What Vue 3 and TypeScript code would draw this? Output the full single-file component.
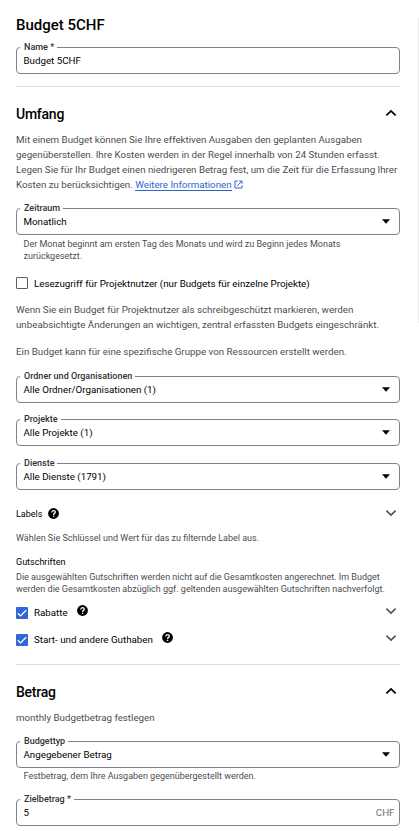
<script setup lang="ts">
import { ref } from 'vue'

interface Field {
  label: string
  value: string
  gap: string
}

const resourceFields: Field[] = [
  { label: 'Ordner und Organisationen', value: 'Alle Ordner/Organisationen (1)', gap: 'gap-17' },
  { label: 'Projekte', value: 'Alle Projekte (1)', gap: 'gap-16' },
  { label: 'Dienste', value: 'Alle Dienste (1791)', gap: 'gap-17' },
]

const credits = ref([
  { label: 'Rabatte', gap: 'gap-11', checked: true },
  { label: 'Start- und andere Guthaben', gap: 'gap-13', checked: true },
])
</script>

<template>
  <main class="panel">
    <div class="edge"></div>
    <h1 class="heading title">Budget 5CHF</h1>

    <div class="field gap-13">
      <span class="field-label">Name *</span>
      <span class="value">Budget 5CHF</span>
    </div>

    <div class="divider gap-12"></div>

    <section>
      <header class="section-head">
        <h2 class="heading">Umfang</h2>
        <svg class="chevron dark" viewBox="0 0 12 8"><path d="M1.4 6.3 6 1.9l4.6 4.4" /></svg>
      </header>
      <p class="copy gap-9">
        Mit einem Budget können Sie Ihre effektiven Ausgaben den geplanten Ausgaben<br />
        gegenüberstellen. Ihre Kosten werden in der Regel innerhalb von 24 Stunden erfasst.<br />
        Legen Sie für Ihr Budget einen niedrigeren Betrag fest, um die Zeit für die Erfassung Ihrer<br />
        Kosten zu berücksichtigen. <a class="link">Weitere Informationen</a>
        <svg class="external" viewBox="0 0 9 9"><path d="M3.7 1H1v7h7V5.3M5.2 1H8v2.8M8 1 3.2 5.8" /></svg>
      </p>

      <div class="field gap-16">
        <span class="field-label">Zeitraum</span>
        <span class="value">Monatlich</span>
        <svg class="arrow" viewBox="0 0 8 5"><path d="M0 .3h8L4 4.7z" /></svg>
      </div>
      <p class="hint gap-3">
        Der Monat beginnt am ersten Tag des Monats und wird zu Beginn jedes Monats<br />zurückgesetzt.
      </p>

      <div class="check-row gap-14">
        <span class="box"></span>
        <span class="strong">Lesezugriff für Projektnutzer (nur Budgets für einzelne Projekte)</span>
      </div>
      <p class="copy gap-12">
        Wenn Sie ein Budget für Projektnutzer als schreibgeschützt markieren, werden<br />
        unbeabsichtigte Änderungen an wichtigen, zentral erfassten Budgets eingeschränkt.
      </p>
      <p class="copy gap-12">Ein Budget kann für eine spezifische Gruppe von Ressourcen erstellt werden.</p>

      <div v-for="f in resourceFields" :key="f.label" class="field" :class="f.gap">
        <span class="field-label">{{ f.label }}</span>
        <span class="value">{{ f.value }}</span>
        <svg class="arrow" viewBox="0 0 8 5"><path d="M0 .3h8L4 4.7z" /></svg>
      </div>

      <div class="labels-row gap-17">
        <span class="small-title">Labels</span>
        <svg class="help" viewBox="0 0 11 11">
          <circle cx="5.5" cy="5.5" r="5.4" />
          <path d="M3.8 4.4C3.8 2 7.3 2 7.3 4.2 7.3 5.4 5.6 5.4 5.6 6.9M5.6 7.7v1.2" />
        </svg>
        <svg class="chevron" viewBox="0 0 12 8"><path d="m1.4 1.7 4.6 4.4 4.6-4.4" /></svg>
      </div>
      <p class="hint tall gap-9">Wählen Sie Schlüssel und Wert für das zu filternde Label aus.</p>

      <h3 class="small-title gap-9">Gutschriften</h3>
      <p class="hint gap-1">
        Die ausgewählten Gutschriften werden nicht auf die Gesamtkosten angerechnet. Im Budget<br />
        werden die Gesamtkosten abzüglich ggf. geltenden ausgewählten Gutschriften nachverfolgt.
      </p>

      <div v-for="c in credits" :key="c.label" class="check-row" :class="c.gap">
        <span class="box" :class="{ checked: c.checked }">
          <svg v-if="c.checked" viewBox="0 0 12 12"><path d="m1.8 6.3 2.7 2.6 5.7-5.7" /></svg>
        </span>
        <span class="strong raised-text">{{ c.label }}</span>
        <svg class="help raised" viewBox="0 0 11 11">
          <circle cx="5.5" cy="5.5" r="5.4" />
          <path d="M3.8 4.4C3.8 2 7.3 2 7.3 4.2 7.3 5.4 5.6 5.4 5.6 6.9M5.6 7.7v1.2" />
        </svg>
        <svg class="chevron" viewBox="0 0 12 8"><path d="m1.4 1.7 4.6 4.4 4.6-4.4" /></svg>
      </div>
    </section>

    <div class="divider gap-17"></div>

    <section>
      <header class="section-head">
        <h2 class="heading">Betrag</h2>
        <svg class="chevron dark" viewBox="0 0 12 8"><path d="M1.4 6.3 6 1.9l4.6 4.4" /></svg>
      </header>
      <p class="copy gap-9">monthly Budgetbetrag festlegen</p>
      <div class="field gap-16">
        <span class="field-label">Budgettyp</span>
        <span class="value">Angegebener Betrag</span>
        <svg class="arrow" viewBox="0 0 8 5"><path d="M0 .3h8L4 4.7z" /></svg>
      </div>
      <p class="hint gap-2">Festbetrag, dem Ihre Ausgaben gegenübergestellt werden.</p>
      <div class="field gap-17">
        <span class="field-label">Zielbetrag *</span>
        <span class="value">5</span>
        <span class="suffix">CHF</span>
      </div>
    </section>
  </main>
</template>

<style>
body {
  background: #fff;
  overflow: hidden;
}
</style>

<style scoped>
.panel {
  position: relative;
  box-sizing: border-box;
  height: 831px;
  padding: 16px 19px 0 16px;
  overflow: hidden;
  font-family: Roboto, 'Liberation Sans', sans-serif;
  font-size: 9.75px;
  color: #000;
  white-space: nowrap;
  display: flow-root;
}
.edge {
  position: absolute;
  right: 0;
  top: 18px;
  width: 1px;
  height: 305px;
  background: #ececec;
}
h1, h2, h3, p { margin: 0; font-weight: 400; }
.gap-1 { margin-top: 1px; }
.gap-2 { margin-top: 2px; }
.gap-3 { margin-top: 3px; }
.gap-9 { margin-top: 9px; }
.gap-11 { margin-top: 11px; }
.gap-12 { margin-top: 12px; }
.gap-13 { margin-top: 13px; }
.gap-14 { margin-top: 14px; }
.gap-16 { margin-top: 16px; }
.gap-17 { margin-top: 17px; }
.heading {
  font-size: 14px;
  font-weight: 500;
  line-height: 18px;
  letter-spacing: -0.25px;
}
.title { font-size: 15px; letter-spacing: 0; }
.section-head {
  display: flex;
  justify-content: space-between;
  align-items: center;
  margin-top: 18px;
  height: 18px;
}
.divider { height: 1px; background: #dcdde0; }
.field {
  position: relative;
  box-sizing: border-box;
  display: flex;
  align-items: center;
  justify-content: space-between;
  height: 27px;
  border: 1px solid #80838c;
  border-radius: 4px;
  padding: 0 9.5px 0 6.5px;
}
.field-label {
  position: absolute;
  left: 3px;
  top: -7px;
  padding: 0 3px 0 4px;
  background: #fff;
  font-size: 9px;
  font-weight: 500;
  line-height: 12px;
  color: #303134;
}
.value { line-height: 15px; }
.suffix { color: #6b6f75; margin-right: -5px; }
.arrow { width: 8px; height: 5px; }
.copy {
  line-height: 15px;
  color: #4b4d51;
}
.link {
  color: #2f62d0;
  border-bottom: 1px solid #2f62d0;
}
.external {
  width: 9px;
  height: 9px;
  margin-left: 2px;
  vertical-align: -1px;
  fill: none;
  stroke: #2f62d0;
}
.hint {
  font-size: 9px;
  line-height: 12px;
  color: #4b4d51;
}
.field + .hint { padding-left: 7.5px; }
.tall { line-height: 15px; }
.small-title { font-size: 9px; line-height: 15px; }
.check-row { display: flex; align-items: center; height: 14px; }
.strong { margin-left: 6px; }
.raised-text { margin-top: -1px; }
.box {
  box-sizing: border-box;
  width: 12px;
  height: 12px;
  border: 1px solid #5c5f64;
  border-radius: 1px;
}
.box.checked { border: 0; background: #3367d6; }
.box svg {
  display: block;
  width: 12px;
  height: 12px;
  fill: none;
  stroke: #fff;
  stroke-width: 1.3;
}
.labels-row { display: flex; align-items: center; height: 15px; }
.help { width: 11px; height: 11px; margin: -3px 0 0 6px; }
.help path { fill: none; stroke: #fff; stroke-width: 1.3; }
.help.raised { margin: -5px 0 0 9.5px; }
.chevron {
  width: 12px;
  height: 8px;
  margin: -4px 3px 0 auto;
  fill: none;
  stroke: #505256;
  stroke-width: 1.6;
}
.chevron.dark { margin-top: -2px; stroke: #000; stroke-width: 1.8; }
</style>
